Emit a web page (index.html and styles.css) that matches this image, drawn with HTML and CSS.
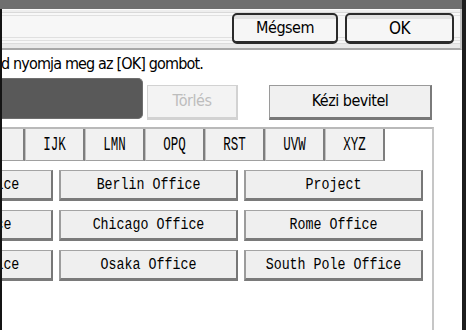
FILE: index.html
```html
<!DOCTYPE html>
<html lang="hu">
<head>
<meta charset="utf-8">
<title>Cél kiválasztása</title>
<link rel="stylesheet" href="styles.css">
</head>
<body>
<div class="screen">
  <div class="left">
    <div class="topband"></div>
    <div class="body">
      <div class="bezel-l"></div>
      <div class="main">
        <div class="titlebar">
          <div class="hbtn cancel">Mégsem</div>
          <div class="hbtn ok">OK</div>
        </div>
        <div class="msg">d nyomja meg az [OK] gombot.</div>
        <div class="inputrow">
          <div class="field"></div>
          <div class="btn clear">Törlés</div>
          <div class="btn manual">Kézi bevitel</div>
        </div>
        <div class="panel">
          <div class="tabs">
            <div class="tab"><span>GH</span></div>
            <div class="tab"><span>IJK</span></div>
            <div class="tab"><span>LMN</span></div>
            <div class="tab"><span>OPQ</span></div>
            <div class="tab"><span>RST</span></div>
            <div class="tab"><span>UVW</span></div>
            <div class="tab"><span>XYZ</span></div>
          </div>
          <div class="grid">
            <div class="dest"><span>Antwerp Office</span></div>
            <div class="dest"><span>Berlin Office</span></div>
            <div class="dest"><span>Project</span></div>
            <div class="dest"><span>Baden Office</span></div>
            <div class="dest"><span>Chicago Office</span></div>
            <div class="dest"><span>Rome Office</span></div>
            <div class="dest"><span>Bangkok Office</span></div>
            <div class="dest"><span>Osaka Office</span></div>
            <div class="dest"><span>South Pole Office</span></div>
          </div>
        </div>
      </div>
    </div>
  </div>
  <div class="bezel-r"></div>
</div>
</body>
</html>
```

FILE: styles.css
```css
* { box-sizing: border-box; }

html, body {
  margin: 0;
  padding: 0;
  background: #ffffff;
}

body {
  font-family: "DejaVu Sans Condensed", "DejaVu Sans", sans-serif;
  font-stretch: condensed;
  color: #000;
}

.screen {
  display: flex;
  width: 466px;
  height: 330px;
  overflow: hidden;
  background: #ffffff;
}

.left {
  width: 462px;
  display: flex;
  flex-direction: column;
}

.topband {
  height: 9px;
  background: #6f6f6f;
  flex: none;
}

.body {
  flex: 1;
  display: flex;
  min-height: 0;
}

.bezel-l {
  width: 2px;
  background: #141414;
  flex: none;
}

.bezel-r {
  width: 4px;
  background: #1d1d1d;
  flex: none;
}

.main {
  width: 460px;
  display: flex;
  flex-direction: column;
  overflow: hidden;
}

/* title bar */
.titlebar {
  height: 41px;
  flex: none;
  display: flex;
  justify-content: flex-end;
  align-items: flex-start;
  gap: 7px;
  padding: 4px 6px 0 0;
  border-right: 2px solid #c4c4c4;
  border-bottom: 2px solid #a8a8a8;
  background: linear-gradient(to bottom,
    #fbfbfb 0, #fbfbfb 1px,
    #eeeeee 1px, #eeeeee 3px,
    #d9d9d9 3px, #d9d9d9 4px,
    #f8f8f8 4px, #f8f8f8 6px,
    #e0e0e0 6px, #e0e0e0 7px,
    #f7f7f7 7px, #f7f7f7 28px,
    #e0e0e0 28px, #e0e0e0 29px,
    #f7f7f7 29px, #f7f7f7 31px,
    #e0e0e0 31px, #e0e0e0 32px,
    #f7f7f7 32px, #f7f7f7 34px,
    #dcdcdc 34px, #dcdcdc 35px,
    #eaeaea 35px, #eaeaea 39px);
}

.hbtn {
  height: 31px;
  border: 2px solid #2b2b2b;
  border-bottom-width: 3px;
  border-radius: 5px;
  background: linear-gradient(to bottom, #e2e2e2 0, #e2e2e2 4px, #f6f6f6 4px);
  font-size: 16px;
  letter-spacing: -0.5px;
  line-height: 26px;
  text-align: center;
}

.hbtn.ok { font-size: 17px; }

.cancel { width: 106px; }
.ok { width: 109px; }

/* message */
.msg {
  height: 28px;
  flex: none;
  font-size: 16px;
  letter-spacing: -0.85px;
  line-height: 20px;
  padding-top: 4px;
  white-space: nowrap;
  margin-left: -1px;
}

/* input row */
.inputrow {
  height: 49px;
  flex: none;
  display: flex;
  align-items: flex-start;
}

.field {
  width: 141px;
  height: 41px;
  background: #595959;
  border: 1px solid #6f6f6f;
  border-left: none;
  border-radius: 0 5px 5px 0;
}

.btn {
  height: 35px;
  margin-top: 7px;
  border: 1px solid #9a9a9a;
  border-right: 2px solid #7a7a7a;
  border-bottom: 3px solid #777777;
  background: #f0f0f0;
  font-size: 16px;
  letter-spacing: -0.5px;
  line-height: 30px;
  text-align: center;
}

.clear {
  width: 91px;
  margin-left: 4px;
  color: #bdbdbd;
  border-color: #d2d2d2;
  background: #f3f3f3;
}

.manual {
  width: 163px;
  margin-left: 31px;
}

/* destination panel */
.panel {
  width: 432px;
  flex: 1;
  border-top: 2px solid #b9b9b9;
  border-right: 2px solid #c6c6c6;
  display: flex;
  flex-direction: column;
}

.tabs {
  display: flex;
  margin-left: -37px;
  height: 32px;
  flex: none;
}

.tab {
  width: 60px;
  flex: none;
  height: 32px;
  background: #f1f1f1;
  border-left: 1px solid #c2c2c2;
  border-right: 2px solid #7e7e7e;
  border-bottom: 1px solid #a0a0a0;
  display: flex;
  align-items: center;
  justify-content: center;
  font-family: "Liberation Mono", "DejaVu Sans Mono", monospace;
  font-size: 12.5px;
}

.tab span {
  display: inline-block;
  transform: scaleY(1.65);
}

.grid {
  display: grid;
  grid-template-columns: 179px 179px 179px;
  column-gap: 6px;
  row-gap: 9px;
  margin-left: -128px;
  margin-top: 9px;
}

.dest {
  height: 31px;
  background: #efefef;
  border-top: 1px solid #a4a4a4;
  border-left: 2px solid #9c9c9c;
  border-right: 2px solid #777777;
  border-bottom: 3px solid #7a7a7a;
  display: flex;
  align-items: center;
  justify-content: center;
  white-space: nowrap;
  overflow: hidden;
  font-family: "Liberation Mono", "DejaVu Sans Mono", monospace;
  font-size: 13.3px;
}

.dest span {
  display: inline-block;
  transform: scaleY(1.3);
}
```
